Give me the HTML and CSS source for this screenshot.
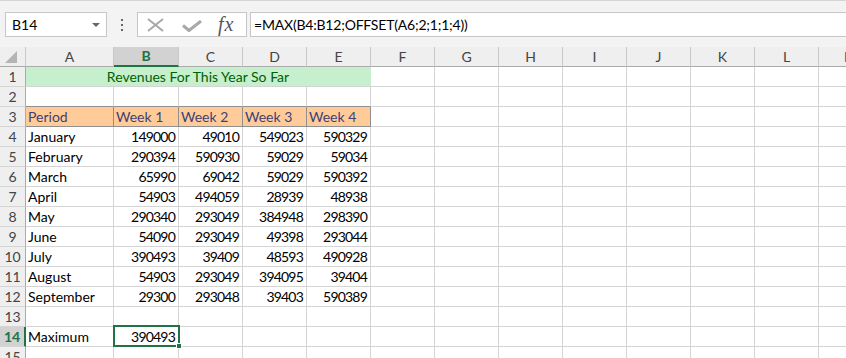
FILE: index.html
```html
<!DOCTYPE html>
<html lang="en">
<head>
    <meta charset="UTF-8">
    <title>Revenues</title>
    <link rel="stylesheet" href="styles.css">
</head>
<body>
    <!-- Formelleiste -->
    <div class="toolbar">
        <div class="name-box"><span>B14</span><span class="drop"></span></div>
        <div class="dots"><i></i><i></i><i></i></div>
        <div class="fx-box">
            <svg class="icon-x" width="17" height="14" viewBox="0 0 17 14"><path d="M1 1 L16 13 M16 1 L1 13" stroke="#a8a8a8" stroke-width="2" fill="none"/></svg>
            <svg class="icon-check" width="20" height="12" viewBox="0 0 20 12"><path d="M1 5.5 L7 10.5 L19 1" stroke="#a8a8a8" stroke-width="3" fill="none"/></svg>
            <span class="fx">fx</span>
        </div>
        <div class="formula">=MAX(B4:B12;OFFSET(A6;2;1;1;4))</div>
    </div>

    <!-- Tabelle -->
    <div class="grid-wrap">
        <table class="sheet">
            <colgroup>
                <col class="w-rh"><col class="w-a"><col class="w-b">
                <col class="w-n"><col class="w-n"><col class="w-n"><col class="w-n"><col class="w-n"><col class="w-n"><col class="w-n"><col class="w-n"><col class="w-n"><col class="w-n"><col class="w-n">
            </colgroup>
            <thead>
                <tr><th class="corner"><span class="tri"></span></th><th>A</th><th class="hd-sel">B</th><th>C</th><th>D</th><th>E</th><th>F</th><th>G</th><th>H</th><th>I</th><th>J</th><th>K</th><th>L</th><th>M</th></tr>
            </thead>
            <tbody>
                <tr><th>1</th><td colspan="5" class="title">Revenues For This Year So Far</td><td></td><td></td><td></td><td></td><td></td><td></td><td></td><td></td></tr>
                <tr><th>2</th><td class="above"></td><td class="above"></td><td class="above"></td><td class="above"></td><td class="above"></td><td></td><td></td><td></td><td></td><td></td><td></td><td></td><td></td></tr>
                <tr><th>3</th><td class="input">Period</td><td class="input">Week 1</td><td class="input">Week 2</td><td class="input">Week 3</td><td class="input">Week 4</td><td></td><td></td><td></td><td></td><td></td><td></td><td></td><td></td></tr>
                <tr><th>4</th><td>January</td><td class="num">149000</td><td class="num">49010</td><td class="num">549023</td><td class="num">590329</td><td></td><td></td><td></td><td></td><td></td><td></td><td></td><td></td></tr>
                <tr><th>5</th><td>February</td><td class="num">290394</td><td class="num">590930</td><td class="num">59029</td><td class="num">59034</td><td></td><td></td><td></td><td></td><td></td><td></td><td></td><td></td></tr>
                <tr><th>6</th><td>March</td><td class="num">65990</td><td class="num">69042</td><td class="num">59029</td><td class="num">590392</td><td></td><td></td><td></td><td></td><td></td><td></td><td></td><td></td></tr>
                <tr><th>7</th><td>April</td><td class="num">54903</td><td class="num">494059</td><td class="num">28939</td><td class="num">48938</td><td></td><td></td><td></td><td></td><td></td><td></td><td></td><td></td></tr>
                <tr><th>8</th><td>May</td><td class="num">290340</td><td class="num">293049</td><td class="num">384948</td><td class="num">298390</td><td></td><td></td><td></td><td></td><td></td><td></td><td></td><td></td></tr>
                <tr><th>9</th><td>June</td><td class="num">54090</td><td class="num">293049</td><td class="num">49398</td><td class="num">293044</td><td></td><td></td><td></td><td></td><td></td><td></td><td></td><td></td></tr>
                <tr><th>10</th><td>July</td><td class="num">390493</td><td class="num">39409</td><td class="num">48593</td><td class="num">490928</td><td></td><td></td><td></td><td></td><td></td><td></td><td></td><td></td></tr>
                <tr><th>11</th><td>August</td><td class="num">54903</td><td class="num">293049</td><td class="num">394095</td><td class="num">39404</td><td></td><td></td><td></td><td></td><td></td><td></td><td></td><td></td></tr>
                <tr><th>12</th><td>September</td><td class="num">29300</td><td class="num">293048</td><td class="num">39403</td><td class="num">590389</td><td></td><td></td><td></td><td></td><td></td><td></td><td></td><td></td></tr>
                <tr><th>13</th><td></td><td></td><td></td><td></td><td></td><td></td><td></td><td></td><td></td><td></td><td></td><td></td><td></td></tr>
                <tr><th class="rh-sel">14</th><td>Maximum</td><td class="num active">390493<span class="sel-box"><span class="handle"></span></span></td><td></td><td></td><td></td><td></td><td></td><td></td><td></td><td></td><td></td><td></td><td></td></tr>
                <tr><th>15</th><td></td><td></td><td></td><td></td><td></td><td></td><td></td><td></td><td></td><td></td><td></td><td></td><td></td></tr>
            </tbody>
        </table>
    </div>
</body>
</html>
```

FILE: styles.css
```css
* {
    box-sizing: border-box;
}
body {
    margin: 0;
    font-family: Lato, "Open Sans", sans-serif;
    font-size: 14px;
    color: #000000;
    background-color: #ffffff;
    overflow: hidden;
}
.toolbar {
    display: flex;
    align-items: flex-start;
    height: 47px;
    padding: 11px 0 0 5px;
    background-color: #f3f3f3;
    border-top: 1px solid #d5d5d5;
}
.name-box {
    width: 102px;
    height: 25px;
    display: flex;
    align-items: center;
    justify-content: space-between;
    padding: 0 6px;
    background-color: #ffffff;
    border: 1px solid #c6c6c6;
}
.drop {
    width: 0;
    height: 0;
    border-left: 4px solid transparent;
    border-right: 4px solid transparent;
    border-top: 4px solid #666666;
}
.dots {
    width: 2px;
    margin: 7px 14px 0 14px;
    display: flex;
    flex-direction: column;
    gap: 3px;
}
.dots i {
    width: 2px;
    height: 2px;
    background-color: #666666;
}
.fx-box {
    width: 110px;
    height: 25px;
    display: flex;
    align-items: center;
    background-color: #ffffff;
    border: 1px solid #c6c6c6;
}
.icon-x {
    margin-left: 9px;
}
.icon-check {
    margin-left: 18px;
    margin-top: 3px;
}
.fx {
    margin-left: 16px;
    font-family: "Liberation Serif", serif;
    font-style: italic;
    font-size: 20px;
    color: #555555;
    letter-spacing: 1px;
}
.formula {
    flex: 1;
    height: 25px;
    margin-left: 3px;
    padding-left: 3px;
    line-height: 23px;
    letter-spacing: -0.2px;
    background-color: #ffffff;
    border: 1px solid #c6c6c6;
    border-right: none;
}
.grid-wrap {
    overflow: hidden;
    width: 100%;
}
.sheet {
    table-layout: fixed;
    width: 883px;
    border-collapse: separate;
    border-spacing: 0;
}
.w-rh { width: 26px; }
.w-a { width: 88px; }
.w-b { width: 65px; }
.w-n { width: 64px; }
.sheet th, .sheet td {
    height: 20px;
    padding: 0 2px;
    line-height: 18px;
    white-space: nowrap;
    overflow: visible;
    vertical-align: middle;
    border-right: 1px solid #d4d4d4;
    border-bottom: 1px solid #d4d4d4;
}
.sheet th {
    font-weight: normal;
    color: #444444;
    background-color: #efefef;
    text-align: center;
    padding: 0;
}
.sheet thead th {
    border-right-color: #c8c8c8;
    border-bottom-color: #ababab;
}
.sheet tbody th {
    border-right-color: #ababab;
    border-bottom-color: #d4d4d4;
}
.corner {
    text-align: right;
    line-height: 0;
}
.sheet thead th.corner {
    vertical-align: bottom;
    line-height: 0;
    padding: 0 3px 3px 0;
}
.tri {
    display: inline-block;
    width: 0;
    height: 0;
    border-left: 12px solid transparent;
    border-bottom: 12px solid #b4b4b4;
}
.sheet thead th.hd-sel {
    background-color: #d2d2d2;
    color: #217346;
    font-weight: bold;
    border-bottom: 2px solid #217346;
}
.sheet tbody th.rh-sel {
    background-color: #d2d2d2;
    color: #217346;
    font-weight: bold;
    border-right: 2px solid #217346;
}
.sheet td.title {
    background-color: #c6efce;
    color: #006100;
    text-align: center;
    border-right-color: #c6efce;
}
.sheet td.above {
    border-bottom-color: #8f8f8f;
}
.sheet td.input {
    background-color: #ffcc99;
    color: #3f3f76;
    border-right-color: #8f8f8f;
    border-bottom-color: #8f8f8f;
}
.sheet td.num {
    text-align: right;
    padding-right: 3px;
    letter-spacing: -0.8px;
}
.sheet td.active {
    position: relative;
}
.sel-box {
    position: absolute;
    top: -2px;
    left: -1px;
    right: -2px;
    bottom: -1px;
    border: 2px solid #217346;
}
.handle {
    position: absolute;
    right: -4px;
    bottom: -4px;
    width: 6px;
    height: 6px;
    background-color: #217346;
    border: 1px solid #ffffff;
}
```
